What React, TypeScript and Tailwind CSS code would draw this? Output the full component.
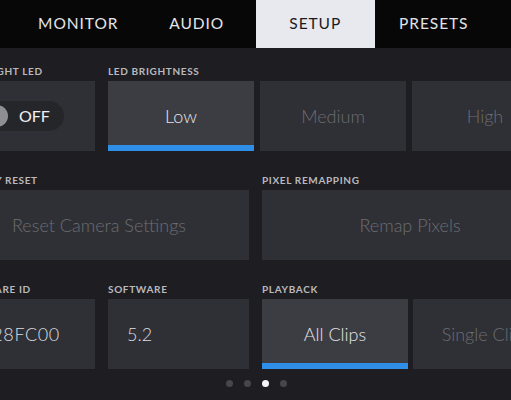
import React from "react";

const font = { fontFamily: "Lato, 'Open Sans', sans-serif" };

function Label({ children, inset }: { children: React.ReactNode; inset?: boolean }) {
  return (
    <div
      className={`h-[14px] leading-[14px] text-[10px] font-bold tracking-[0.065em] text-[#b9b9be] whitespace-nowrap mb-[3px] ${
        inset ? "pl-[4px]" : ""
      }`}
    >
      {children}
    </div>
  );
}

function Btn({
  children,
  active,
  w,
}: {
  children: React.ReactNode;
  active?: boolean;
  w: string;
}) {
  return (
    <div
      className={`${w} relative h-[70px] shrink-0 flex items-center justify-center text-[18px] font-light whitespace-nowrap overflow-hidden ${
        active ? "bg-[#3c3d42] text-[#e4e4e8]" : "bg-[#2f3035] text-[#6c6d72]"
      }`}
    >
      <span>{children}</span>
      {active && <div className="absolute left-0 right-0 bottom-0 h-[6px] bg-[#2f8fe8]" />}
    </div>
  );
}

export default function App() {
  const tabs = ["MONITOR", "AUDIO", "SETUP", "PRESETS"];
  return (
    <div className="w-[511px] h-[400px] overflow-hidden bg-[#1d1d22]" style={font}>
      <div className="h-[48px] bg-[#070707] flex pl-[19px]">
        {tabs.map((t) => (
          <div
            key={t}
            className={`w-[118.5px] shrink-0 flex items-center justify-center text-[15.5px] tracking-[0.06em] ${
              t === "SETUP" ? "bg-[#e8e9ee] text-[#1b1b1e]" : "text-[#e4e4e8]"
            }`}
          >
            {t}
          </div>
        ))}
      </div>

      <div className="flex flex-col gap-[22px] pt-[16px] ml-[-51px]">
        {/* Row 1 */}
        <div className="flex gap-[13px]">
          <div className="w-[146px] shrink-0">
            <Label inset>TALLY LIGHT LED</Label>
            <div className="h-[70px] bg-[#2f3035] flex items-center justify-center pl-[2px]">
              <div className="h-[30px] w-[82px] rounded-full bg-[#25262a] flex items-center pl-[4px]">
                <div className="w-[22px] h-[22px] rounded-full bg-[#8e8e93]" />
                <span className="ml-[11px] text-[16px] text-[#f0f0f2]">OFF</span>
              </div>
            </div>
          </div>
          <div>
            <Label>LED BRIGHTNESS</Label>
            <div className="flex gap-[6px]">
              <Btn w="w-[146px]" active>Low</Btn>
              <Btn w="w-[146px]">Medium</Btn>
              <Btn w="w-[146px]">High</Btn>
            </div>
          </div>
        </div>

        {/* Row 2 */}
        <div className="flex gap-[13px]">
          <div className="w-[300px] shrink-0">
            <Label inset>FACTORY RESET</Label>
            <Btn w="w-[300px]">Reset Camera Settings</Btn>
          </div>
          <div className="w-[296px] shrink-0">
            <Label>PIXEL REMAPPING</Label>
            <Btn w="w-[296px]">Remap Pixels</Btn>
          </div>
        </div>

        {/* Row 3 */}
        <div className="flex gap-[13px]">
          <div className="w-[146px] shrink-0">
            <Label inset>HARDWARE ID</Label>
            <div className="h-[70px] bg-[#2f3035] flex items-center pl-[18px] text-[18px] font-light tracking-[0.6px] text-[#dcdce0] whitespace-nowrap overflow-hidden">
              7D28FC00
            </div>
          </div>
          <div className="w-[141px] shrink-0">
            <Label>SOFTWARE</Label>
            <div className="h-[70px] bg-[#2f3035] flex items-center pl-[19px] text-[18px] font-light text-[#dcdce0]">
              5.2
            </div>
          </div>
          <div>
            <Label>PLAYBACK</Label>
            <div className="flex gap-[5px]">
              <Btn w="w-[146px]" active>All Clips</Btn>
              <Btn w="w-[146px]">Single Clips</Btn>
            </div>
          </div>
        </div>
      </div>

      <div className="flex justify-center gap-[11px] mt-[11px] pl-[1px]">
        <div className="w-[7px] h-[7px] rounded-full bg-[#46464b]" />
        <div className="w-[7px] h-[7px] rounded-full bg-[#46464b]" />
        <div className="w-[7px] h-[7px] rounded-full bg-[#f4f4f6]" />
        <div className="w-[7px] h-[7px] rounded-full bg-[#46464b]" />
      </div>
    </div>
  );
}
